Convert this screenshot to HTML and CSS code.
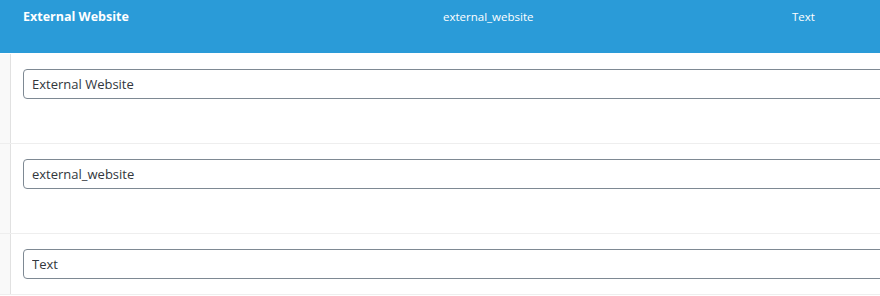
FILE: index.html
```html
<!DOCTYPE html>
<html>
<head>
<meta charset="utf-8">
<link rel="stylesheet" href="styles.css">
</head>
<body>
<div class="field">
  <div class="head">
    <div class="h-label">External Website</div>
    <div class="h-name">external_website</div>
    <div class="h-type">Text</div>
  </div>
  <div class="rows">
    <div class="row tall"><div class="gutter"></div><div class="cell"><input class="inp" type="text" value="External Website"></div></div>
    <div class="row tall"><div class="gutter"></div><div class="cell"><input class="inp" type="text" value="external_website"></div></div>
    <div class="row"><div class="gutter"></div><div class="cell"><input class="inp" type="text" value="Text"></div></div>
  </div>
</div>
</body>
</html>
```
FILE: styles.css
```css
html, body { margin: 0; padding: 0; background: #fff; overflow: hidden; }
body { width: 880px; height: 296px; font-family: "Open Sans", "Noto Sans", sans-serif; }
.head {
  height: 54px;
  background: #2a9bd8;
  border-bottom: 1px solid #ffffff;
  color: #fff;
  display: grid;
  grid-template-columns: 420px 349px 1fr;
  padding-left: 23px;
  box-sizing: border-box;
}
.h-label { font-size: 12.5px; font-weight: 700; padding-top: 8px; line-height: 18px; }
.h-name, .h-type { font-size: 11.5px; padding-top: 8px; line-height: 18px; }
.row { display: flex; border-bottom: 1px solid #eeeeee; }
.gutter { width: 10px; background: #f9f9f9; border-right: 1px solid #e1e1e1; flex: none; }
.cell { flex: 1; padding: 15px 0 15px 12px; }
.row.tall .cell { padding-bottom: 44px; }
.inp {
  display: block;
  box-sizing: border-box;
  width: 1000px;
  height: 30px;
  margin: 0;
  border: 1px solid #7e8993;
  border-radius: 4px;
  padding: 0 8px;
  font-family: "Open Sans", "Noto Sans", sans-serif;
  font-size: 13px;
  color: #32373c;
  background: #fff;
  outline: none;
}
```
